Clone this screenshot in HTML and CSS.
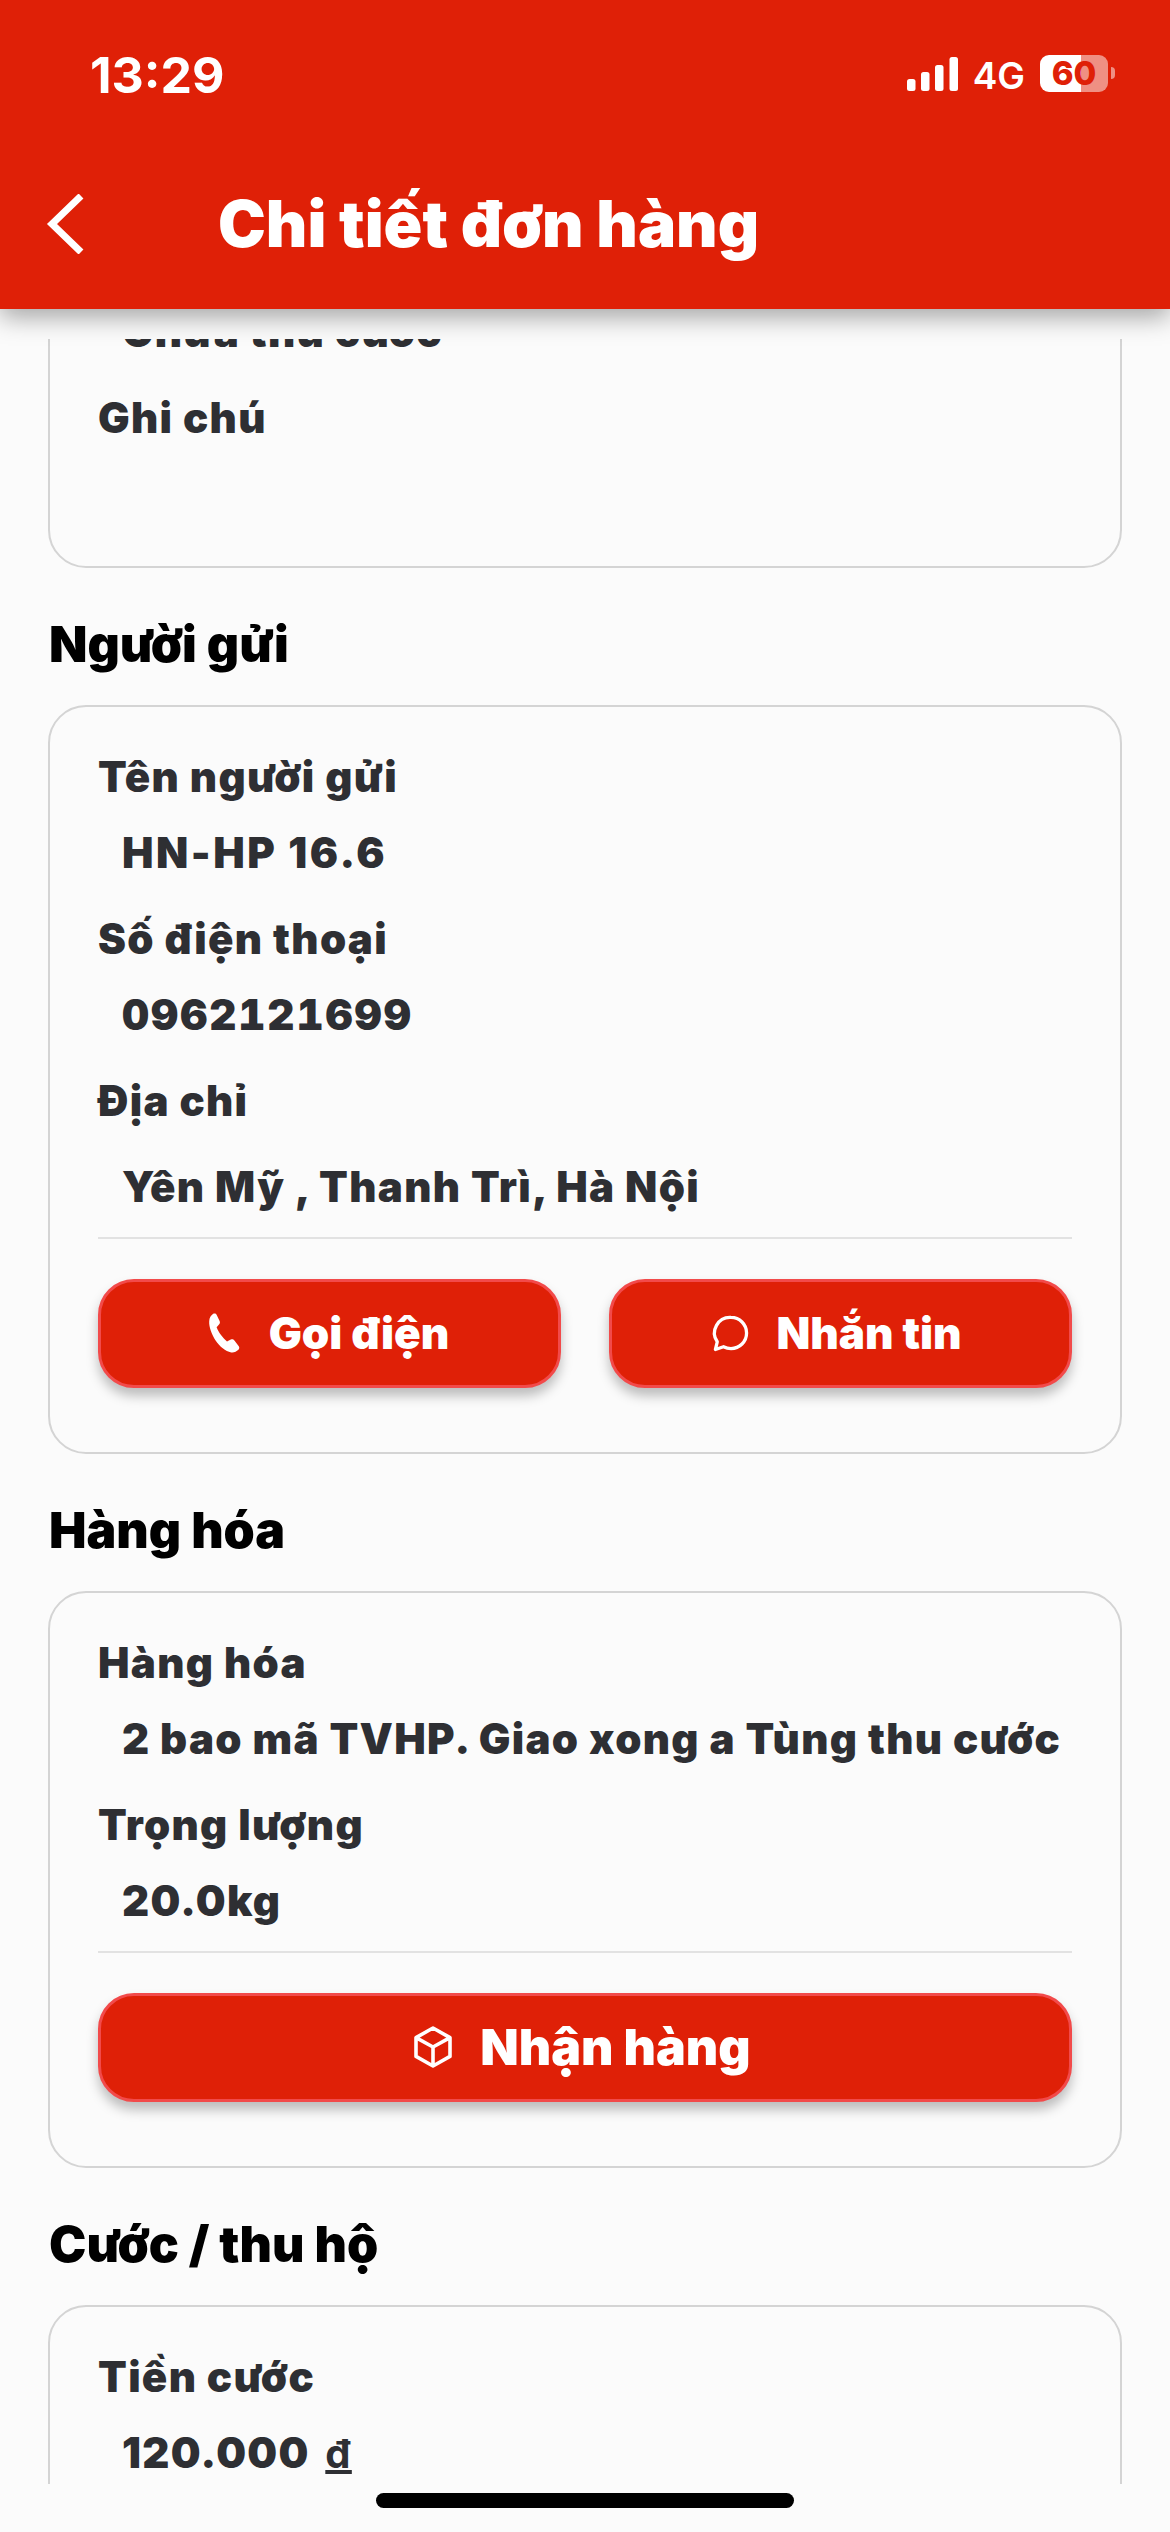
FILE: index.html
```html
<!DOCTYPE html>
<html lang="vi">
<head>
  <meta charset="UTF-8" />
  <meta name="viewport" content="width=device-width, initial-scale=1.0"/>
  <title>Chi tiết đơn hàng</title>
  <link rel="stylesheet" href="styles.css">
</head>
<body>
  <div class="phone">
    <header class="header">
      <div class="status">
        <span class="time">13:29</span>
        <div class="status-right">
          <svg class="signal" width="51" height="34" viewBox="0 0 51 34">
            <rect x="0" y="22" width="8.500" height="12" rx="2.500"/>
            <rect x="14" y="15" width="8.500" height="19" rx="2.500"/>
            <rect x="28" y="8" width="8.500" height="26" rx="2.500"/>
            <rect x="42.500" y="0" width="8.500" height="34" rx="2.500"/>
          </svg>
          <span class="net">4G</span>
          <div class="battery"><span>60</span></div>
          <div class="battery-tip"></div>
        </div>
      </div>
      <div class="nav">
        <svg class="back" width="40" height="60" viewBox="0 0 40 60">
          <path d="M35 2 L6 30 L35 58"/>
        </svg>
        <h1>Chi tiết đơn hàng</h1>
      </div>
    </header>

    <main class="content">
      <div class="scroller">
        <section class="card card-first">
          <div class="value">Chưa thu cước</div>
          <div class="label">Ghi chú</div>
        </section>

        <h2>Người gửi</h2>
        <section class="card">
          <div class="label">Tên người gửi</div>
          <div class="value value-wide">HN-HP 16.6</div>
          <div class="label">Số điện thoại</div>
          <div class="value value-phone">0962121699</div>
          <div class="label">Địa chỉ</div>
          <div class="value value-tall">Yên Mỹ , Thanh Trì, Hà Nội</div>
          <div class="divider"></div>
          <div class="actions">
            <button class="btn">
              <svg class="phone-icon" width="48" height="48" viewBox="0 0 24 24"><path class="fill" d="M6.600 2.400c.7-.4 1.400-.2 1.700.5l1.500 3.100c.3.600.2 1.300-.3 1.800L8.300 9.100c.6 1.500 1.400 2.800 2.300 4 .8 1.100 1.800 2.200 2.900 3.100l1.900-.9c.7-.3 1.400-.1 1.800.5l2.200 2.800c.4.600.3 1.300-.2 1.800-1 .9-2.200 1.500-3.600 1.300-2.900-.4-5.700-2.900-7.800-5.900C5.900 12.600 4.400 8.900 4.600 6.100c.1-1.600.8-2.900 2-3.700z"/></svg>
              Gọi điện
            </button>
            <button class="btn">
              <svg width="44" height="44" viewBox="0 0 24 24"><path class="line" d="M12 3.500a8.500 8.500 0 0 1 0 17c-1.500 0-2.900-.4-4.100-1L3.500 21l1-4.200A8.500 8.500 0 0 1 12 3.500z"/></svg>
              Nhắn tin
            </button>
          </div>
        </section>

        <h2>Hàng hóa</h2>
        <section class="card">
          <div class="label">Hàng hóa</div>
          <div class="value">2 bao mã TVHP. Giao xong a Tùng thu cước</div>
          <div class="label">Trọng lượng</div>
          <div class="value">20.0kg</div>
          <div class="divider"></div>
          <div class="actions">
            <button class="btn btn-big">
              <svg width="48" height="48" viewBox="0 0 24 24"><path class="line" d="M12 2.500l8.500 4.800v9.400L12 21.500l-8.500-4.800V7.300zM3.500 7.300L12 12l8.500-4.700M12 12v9.500"/></svg>
              Nhận hàng
            </button>
          </div>
        </section>

        <h2>Cước / thu hộ</h2>
        <section class="card card-last">
          <div class="label">Tiền cước</div>
          <div class="value">120.000 <u>đ</u></div>
        </section>
      </div>
    </main>

    <div class="home-area"><div class="home-bar"></div></div>
  </div>
</body>
</html>
```
FILE: styles.css
```css
* {
  box-sizing: border-box;
}

body {
  margin: 0;
  font-family: Inter, "Noto Sans", sans-serif;
  font-weight: 700;
  background: #fbfbfb;
}

.phone {
  width: 1170px;
  height: 2532px;
  display: flex;
  flex-direction: column;
  overflow: hidden;
}

/* header */
.header {
  position: relative;
  z-index: 2;
  height: 309px;
  flex: none;
  background: #df2007;
  color: #fff;
  box-shadow: 0 8px 24px rgba(0, 0, 0, 0.35);
}

.status {
  height: 186px;
  padding: 48px 55px 0 90px;
  display: flex;
  justify-content: space-between;
}

.time {
  font-size: 50px;
  line-height: 54px;
  font-weight: 700;
}

.status-right {
  display: flex;
  align-items: flex-start;
  padding-top: 7px;
}

.signal {
  fill: #fff;
  margin: 2px 15px 0 0;
}

.net {
  font-size: 37px;
  line-height: 42px;
  font-weight: 600;
  margin-right: 15px;
}

.battery {
  width: 68px;
  height: 37px;
  border-radius: 9px;
  background: linear-gradient(90deg, #fff 60%, rgba(255, 255, 255, 0.5) 60%);
  color: #df2007;
  font-size: 33px;
  line-height: 37px;
  font-weight: 800;
  text-align: center;
}

.battery-tip {
  width: 4px;
  height: 12px;
  margin: 12px 0 0 3px;
  border-radius: 0 4px 4px 0;
  background: rgba(255, 255, 255, 0.5);
}

.nav {
  display: flex;
  align-items: center;
  padding-left: 46px;
}

.back {
  fill: none;
  stroke: #fff;
  stroke-width: 7;
}

h1 {
  margin: 0 0 0 132px;
  font-size: 64px;
  line-height: 76px;
  font-weight: 900;
}

/* scrolled content, clipped just under the header shadow */
.content {
  flex: 1;
  overflow: hidden;
  margin-top: 30px;
  padding: 0 48px;
  min-height: 0;
}

.scroller {
  margin-top: -57px;
}

.card {
  border: 2px solid #d4d4d4;
  border-radius: 38px;
  padding: 42px 48px 0;
  background: #fbfbfb;
}

.card-first {
  padding-top: 0;
  height: 286px;
}

.card-last {
  padding-bottom: 200px;
}

h2 {
  margin: 45px 0 30px 1px;
  font-size: 50px;
  line-height: 62px;
  font-weight: 900;
  color: #000;
}

.label,
.value {
  font-size: 42px;
  line-height: 56px;
  font-weight: 900;
  color: #2e2f33;
  letter-spacing: 1.300px;
}

.value {
  padding-left: 24px;
  margin-top: 20px;
}

.value + .label {
  margin-top: 30px;
}

.value-tall {
  margin-top: 30px;
}

.value-wide {
  letter-spacing: 2.500px;
}

.value-phone {
  letter-spacing: 2px;
  font-variant-numeric: tabular-nums;
}

.value u {
  margin-left: 6px;
  font-size: 40px;
  font-weight: 700;
}

.divider {
  height: 2px;
  background: #e2e2e2;
  margin: 22px 0 40px;
}

.actions {
  display: flex;
  gap: 48px;
  padding-bottom: 64px;
}

.btn {
  flex: 1;
  height: 109px;
  display: flex;
  align-items: center;
  justify-content: center;
  gap: 23px;
  padding: 0 10px 2px 0;
  border: 3px solid #f24a4a;
  border-radius: 36px;
  background: #df2007;
  color: #fff;
  font-family: inherit;
  font-size: 44px;
  font-weight: 900;
  box-shadow: 0 8px 12px rgba(0, 0, 0, 0.25);
}

.btn-big {
  font-size: 50px;
}

.phone-icon {
  margin-right: -2px;
}

.fill {
  fill: #fff;
}

.line {
  fill: none;
  stroke: #fff;
  stroke-width: 1.800;
  stroke-linejoin: round;
}

/* home indicator */
.home-area {
  height: 48px;
  flex: none;
  background: #fbfbfb;
}

.home-bar {
  width: 418px;
  height: 15px;
  margin: 9px auto 0;
  border-radius: 8px;
  background: #000;
}
```
